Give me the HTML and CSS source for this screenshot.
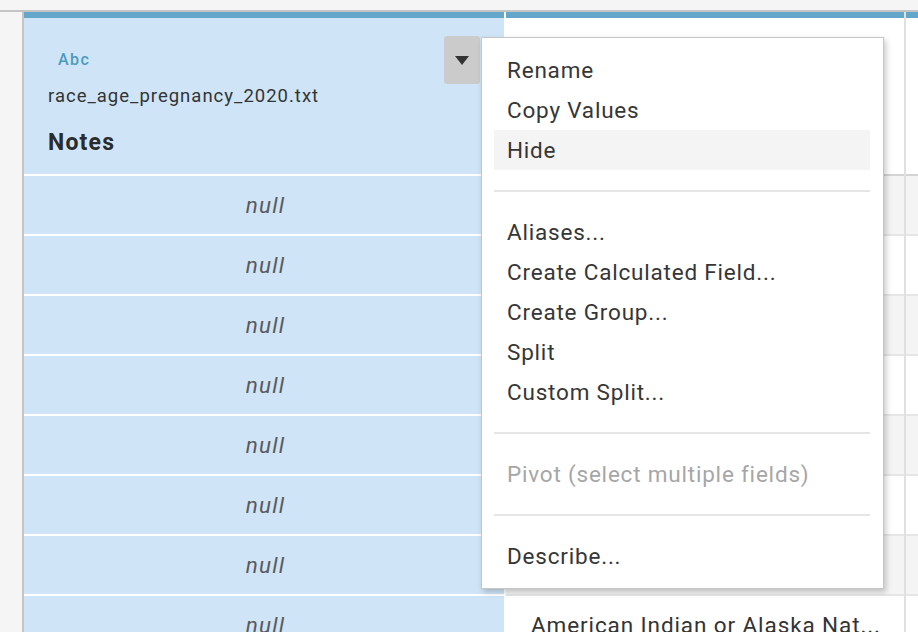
FILE: index.html
```html
<!DOCTYPE html>
<html>
<head>
<meta charset="utf-8">
<link rel="stylesheet" href="styles.css">
</head>
<body>
<div class="top-strip"></div>
<div class="frame">
  <div class="gutter"></div>
  <div class="grid">
    <div class="col col-notes">
      <div class="bar"></div>
      <div class="head">
        <div class="head-info">
          <div class="type">Abc</div>
          <div class="source">race_age_pregnancy_2020.txt</div>
          <div class="name">Notes</div>
        </div>
        <div class="drop-btn">
          <svg width="14" height="9" viewBox="0 0 14 9"><path d="M0 0H14L7 9Z" fill="#333"/></svg>
        </div>
      </div>
      <div class="row">null</div>
      <div class="row">null</div>
      <div class="row">null</div>
      <div class="row">null</div>
      <div class="row">null</div>
      <div class="row">null</div>
      <div class="row">null</div>
      <div class="row">null</div>
    </div>
    <div class="col col-data">
      <div class="bar"></div>
      <div class="head"></div>
      <div class="row odd"></div>
      <div class="row"></div>
      <div class="row odd"></div>
      <div class="row"></div>
      <div class="row odd"></div>
      <div class="row"></div>
      <div class="row odd"></div>
      <div class="row">American Indian or Alaska Nat...</div>
    </div>
    <div class="col col-data col-edge">
      <div class="bar"></div>
      <div class="head"></div>
      <div class="row odd"></div>
      <div class="row"></div>
      <div class="row odd"></div>
      <div class="row"></div>
      <div class="row odd"></div>
      <div class="row"></div>
      <div class="row odd"></div>
      <div class="row"></div>
    </div>
  </div>
</div>

<div class="menu">
  <div class="item">Rename</div>
  <div class="item">Copy Values</div>
  <div class="item hover">Hide</div>
  <div class="sep"></div>
  <div class="item">Aliases...</div>
  <div class="item">Create Calculated Field...</div>
  <div class="item">Create Group...</div>
  <div class="item">Split</div>
  <div class="item">Custom Split...</div>
  <div class="sep"></div>
  <div class="item disabled">Pivot (select multiple fields)</div>
  <div class="sep"></div>
  <div class="item">Describe...</div>
</div>
</body>
</html>
```

FILE: styles.css
```css
html, body {
  margin: 0;
  padding: 0;
}
body {
  width: 918px;
  height: 632px;
  overflow: hidden;
  background: #f5f5f5;
  font-family: Roboto, "Liberation Sans", sans-serif;
  color: #333;
  position: relative;
}
.top-strip {
  height: 10px;
  background: #f5f5f5;
}
.frame {
  display: flex;
  border-top: 2px solid #c4c4c4;
  height: 620px;
}
.gutter {
  width: 22px;
  flex: none;
  background: #f5f5f5;
}
.grid {
  display: flex;
  border-left: 2px solid #c4c4c4;
  flex: 1;
  overflow: hidden;
}
.col {
  display: flex;
  flex-direction: column;
  flex: none;
}
.bar {
  height: 6px;
  background: #63a6ca;
  flex: none;
}
.head {
  height: 156px;
  flex: none;
}
.row {
  height: 58px;
  flex: none;
  display: flex;
  align-items: center;
  font-size: 22.5px;
  letter-spacing: 0.9px;
}

.col-notes {
  width: 480px;
  border-right: 2px solid #fff;
  background: #cfe5f7;
}
.col-notes .head {
  display: flex;
  justify-content: space-between;
  align-items: flex-start;
  border-bottom: 2px solid #fff;
}
.col-notes .row {
  border-bottom: 2px solid #fff;
  justify-content: center;
  font-style: italic;
  color: #5a5a5a;
  letter-spacing: 1.2px;
  padding-left: 3px;
}
.head-info {
  padding-left: 24px;
  padding-top: 32px;
}
.type {
  font-size: 16px;
  line-height: 20px;
  color: #4b9ac0;
  font-weight: 500;
  letter-spacing: 1.4px;
  margin-left: 10px;
}
.source {
  font-size: 18.5px;
  line-height: 22px;
  letter-spacing: 1px;
  margin-top: 15px;
  color: #333;
}
.name {
  font-size: 23px;
  line-height: 28px;
  font-weight: 700;
  letter-spacing: 1.2px;
  margin-top: 22px;
  color: #2b2b2b;
}
.drop-btn {
  width: 36px;
  height: 48px;
  margin-top: 18px;
  margin-right: 24px;
  background: #cbcbcb;
  border-radius: 3px;
  display: flex;
  justify-content: center;
  padding-top: 20px;
  box-sizing: border-box;
}
.drop-btn svg {
  display: block;
}

.col-data {
  width: 398px;
  border-right: 2px solid #e0e0e0;
  background: #fff;
}
.col-data .head {
  border-bottom: 2px solid #d4d4d4;
}
.col-data .row {
  border-bottom: 2px solid #e6e6e6;
  padding-left: 25px;
  color: #333;
  white-space: nowrap;
}
.col-data .row.odd {
  background: #f4f4f4;
}
.col-edge {
  width: 12px;
  border-right: none;
}

.menu {
  position: absolute;
  left: 481px;
  top: 37px;
  width: 376px;
  height: 538px;
  padding: 12px 13px 0 12px;
  border: 1px solid #c6c6c6;
  background: #fff;
  box-shadow: 2px 3px 6px rgba(0, 0, 0, 0.22);
}
.item {
  height: 40px;
  line-height: 40px;
  padding-left: 13px;
  font-size: 22.5px;
  letter-spacing: 0.8px;
  color: #363636;
  white-space: nowrap;
}
.item.hover {
  background: #f4f4f4;
}
.item.disabled {
  color: #a6a6a6;
}
.sep {
  height: 2px;
  background: #e6e6e6;
  margin: 20px 0;
}
```
